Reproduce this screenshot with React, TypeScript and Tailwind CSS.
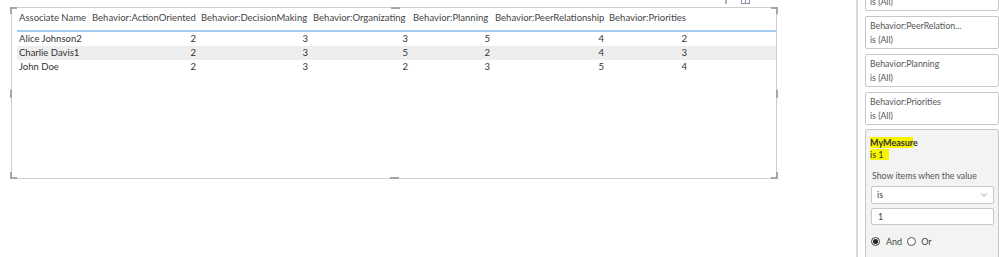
import { ChevronDown } from "lucide-react";

const columns = [
  { label: "Associate Name", width: "w-[73px]", numeric: false },
  { label: "Behavior:ActionOriented", width: "w-[109px]", numeric: true },
  { label: "Behavior:DecisionMaking", width: "w-[112px]", numeric: true },
  { label: "Behavior:Organizating", width: "w-[100px]", numeric: true },
  { label: "Behavior:Planning", width: "w-[82px]", numeric: true },
  { label: "Behavior:PeerRelationship", width: "w-[114px]", numeric: true },
  { label: "Behavior:Priorities", width: "w-[83px]", numeric: true },
];

const rows: (string | number)[][] = [
  ["Alice Johnson2", 2, 3, 3, 5, 4, 2],
  ["Charlie Davis1", 2, 3, 5, 2, 4, 3],
  ["John Doe", 2, 3, 2, 3, 5, 4],
];

const filters = ["Behavior:PeerRelation...", "Behavior:Planning", "Behavior:Priorities"];

function Handles() {
  return (
    <>
      {/* corners */}
      <div className="absolute -left-[2px] -top-[1px] w-[7px] h-[2px] bg-[#a6a6a6]" />
      <div className="absolute -left-[2px] -top-[1px] w-[2px] h-[7px] bg-[#a6a6a6]" />
      <div className="absolute -right-[2px] -top-[1px] w-[7px] h-[2px] bg-[#a6a6a6]" />
      <div className="absolute -right-[2px] -top-[1px] w-[2px] h-[7px] bg-[#a6a6a6]" />
      <div className="absolute -left-[2px] -bottom-[1px] w-[7px] h-[2px] bg-[#a6a6a6]" />
      <div className="absolute -left-[2px] -bottom-[1px] w-[2px] h-[7px] bg-[#a6a6a6]" />
      <div className="absolute -right-[2px] -bottom-[1px] w-[7px] h-[2px] bg-[#a6a6a6]" />
      <div className="absolute -right-[2px] -bottom-[1px] w-[2px] h-[7px] bg-[#a6a6a6]" />
      {/* sides */}
      <div className="absolute left-[379px] -top-[1px] w-[9px] h-[2px] bg-[#a6a6a6]" />
      <div className="absolute left-[378px] -bottom-[1px] w-[9px] h-[2px] bg-[#a6a6a6]" />
      <div className="absolute -left-[2px] top-[82px] w-[2px] h-[8px] bg-[#a6a6a6]" />
      <div className="absolute -right-[2px] top-[82px] w-[2px] h-[8px] bg-[#a6a6a6]" />
      {/* header icons, cut off above the visual */}
      <div className="absolute left-[713px] -top-[8px] w-[2px] h-[4px] bg-[#c9a3c9]" />
      <svg className="absolute left-[729px] -top-[10px]" width="9" height="7" viewBox="0 0 9 7">
        <rect x="0.5" y="0.5" width="8" height="5" fill="none" stroke="#9a8aa8" />
        <line x1="4.5" y1="0" x2="4.5" y2="6" stroke="#9a8aa8" />
      </svg>
    </>
  );
}

function TableVisual() {
  return (
    <div className="relative ml-[11px] mt-[7px] w-[766px] h-[172px] border border-[#cfcfcf] bg-white">
      <Handles />
      <div className="pl-[5px]">
        <div className="flex h-[24px] pt-[3px] border-b-2 border-[#a3cdf3] text-[#444]">
          {columns.map((c) => (
            <div key={c.label} className={`${c.width} shrink-0 pl-[2px] whitespace-nowrap leading-[14px]`}>
              {c.label}
            </div>
          ))}
        </div>
        {rows.map((r, i) => (
          <div key={i} className={`flex h-[14px] items-center text-[#333] ${i === 1 ? "bg-[#eeeeee]" : ""}`}>
            {r.map((v, j) => (
              <div
                key={j}
                className={`${columns[j].width} shrink-0 whitespace-nowrap leading-[14px] ${
                  columns[j].numeric ? "text-right pr-[3px]" : "pl-[2px]"
                }`}
              >
                {v}
              </div>
            ))}
          </div>
        ))}
      </div>
    </div>
  );
}

function FilterCard({ title, className = "" }: { title: string; className?: string }) {
  return (
    <div className={`w-[134px] h-[33px] shrink-0 border border-[#c8c8c8] rounded-[2px] bg-white pl-[4px] pt-[2px] ${className}`}>
      <div className="text-[8.75px] leading-[14px] text-[#555] whitespace-nowrap">{title}</div>
      <div className="text-[8.75px] leading-[14px] text-[#555]">is (All)</div>
    </div>
  );
}

function FilterPane() {
  return (
    <div className="flex h-[257px] w-[143px] shrink-0">
      <div className="w-[2px] h-full bg-[#dadada]" />
      <div className="flex flex-col gap-[5px] pl-[7px] overflow-hidden">
        <FilterCard title="Behavior:Organizating" className="-mt-[22px]" />
        {filters.map((f) => (
          <FilterCard key={f} title={f} />
        ))}
        <div className="-mt-[1px] w-[134px] h-[140px] shrink-0 border border-[#c8c8c8] rounded-[2px] bg-[#f3f3f3] pl-[4px] pt-[7px] pr-[4px]">
          <div className="text-[9px] leading-[12px] font-bold text-[#333]">
            <span className="bg-[#f7f400]">MyMeasur</span>e
          </div>
          <div className="text-[9px] leading-[12px] text-[#333]">
            <span className="bg-[#f7f400] pr-[5px]">is 1</span>
          </div>
          <div className="mt-[9px] pl-[2px] text-[8.75px] leading-[12px] text-[#555]">Show items when the value</div>
          <div className="mt-[4px] ml-[1px] h-[18px] flex items-center justify-between border border-[#c8c8c8] rounded-[2px] bg-white pl-[5px] pr-[4px] text-[9px] text-[#444]">
            <span>is</span>
            <ChevronDown size={10} strokeWidth={1.5} className="text-[#666]" />
          </div>
          <div className="mt-[4px] ml-[1px] h-[17px] flex items-center border border-[#c8c8c8] rounded-[2px] bg-white pl-[6px] text-[9px] text-[#444]">
            1
          </div>
          <div className="mt-[10px] ml-[1px] flex items-center text-[9px] text-[#444]">
            <span className="w-[9px] h-[9px] rounded-full border border-[#444] flex items-center justify-center">
              <span className="w-[5px] h-[5px] rounded-full bg-[#222]" />
            </span>
            <span className="ml-[6px]">And</span>
            <span className="ml-[5px] w-[9px] h-[9px] rounded-full border border-[#555] bg-white" />
            <span className="ml-[5px]">Or</span>
          </div>
          <div className="mt-[8px] ml-[1px] h-[18px] border border-[#c8c8c8] rounded-[2px] bg-white" />
        </div>
      </div>
    </div>
  );
}

export default function App() {
  return (
    <div className="flex w-[999px] h-[257px] overflow-hidden bg-white font-['Lato',sans-serif] text-[9.5px]">
      <div className="w-[856px] shrink-0">
        <TableVisual />
      </div>
      <FilterPane />
    </div>
  );
}
